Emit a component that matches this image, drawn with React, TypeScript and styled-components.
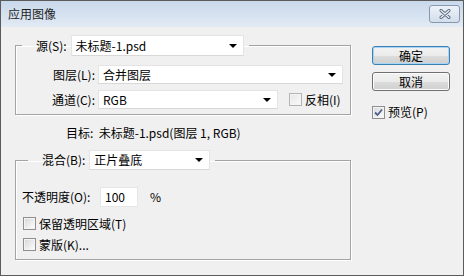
import React, { useState } from 'react'
import styled, { createGlobalStyle } from 'styled-components'

const GlobalStyle = createGlobalStyle`
  html, body {
    margin: 0;
    padding: 0;
    background: #f0f0f0;
  }
  body {
    font-family: "Noto Sans CJK SC", "Noto Sans", sans-serif;
    font-size: 12px;
    color: #000;
  }
  * { box-sizing: border-box; }
`

const Window = styled.div`
  width: 464px;
  height: 276px;
  border: 1px solid #5b5b5b;
  background: #f0f0f0;
  display: flex;
  flex-direction: column;
  overflow: hidden;
`

const TitleBar = styled.div`
  height: 26px;
  flex: none;
  display: flex;
  align-items: flex-start;
  justify-content: space-between;
  padding: 0 3px 0 7px;
  background: linear-gradient(#c8d8eb 0%, #d6e2f0 55%, #e2eaf4 100%);
`

const Title = styled.span`
  margin-top: 5px;
  line-height: 16px;
  font-size: 12px;
  color: #1e1e1e;
`

const CloseButton = styled.div`
  margin-top: 4px;
  width: 31px;
  height: 18px;
  border: 1px solid #8797ad;
  border-radius: 3px;
  background: linear-gradient(#edf2f8, #d3deeb);
  display: flex;
  align-items: center;
  justify-content: center;
`

const Body = styled.div`
  flex: 1;
  display: flex;
  padding: 8px 0 0 14px;
  gap: 21px;
`

const LeftColumn = styled.div`
  width: 336px;
  display: flex;
  flex-direction: column;
`

const RightColumn = styled.div`
  width: 78px;
  display: flex;
  flex-direction: column;
  padding-top: 11px;
`

const Group = styled.fieldset<{ $top: number; $bottom: number; $left?: number }>`
  margin: 0;
  border: 1px solid #a3a3a3;
  box-shadow: inset 1px 1px 0 #fff, 1px 1px 0 #fff;
  padding: ${p => p.$top}px 0 ${p => p.$bottom}px ${p => p.$left ?? 0}px;
  display: flex;
  flex-direction: column;
  min-width: 0;
`

const Legend = styled.legend`
  margin-left: 6px;
  padding: 0 5px 0 14px;
  display: flex;
  align-items: center;
`

const Label = styled.span<{ $width?: number; $right?: boolean }>`
  line-height: 16px;
  white-space: nowrap;
  ${p => (p.$width ? `width: ${p.$width}px; flex: none;` : '')}
  text-align: ${p => (p.$right ? 'right' : 'left')};
`

const LegendLabel = styled(Label)`
  margin-right: 4px;
`

const SelectBox = styled.div<{ $width: number; $height: number }>`
  width: ${p => p.$width}px;
  height: ${p => p.$height}px;
  background: #fff;
  border: 1px solid #e4e4e4;
  border-bottom-color: #d8d8d8;
  display: flex;
  align-items: center;
  justify-content: space-between;
  padding: 0 6px 0 4px;
  line-height: 16px;
`

const Arrow = styled.span`
  width: 0;
  height: 0;
  border-left: 4px solid transparent;
  border-right: 4px solid transparent;
  border-top: 4px solid #000;
`

const Row = styled.div<{ $h: number }>`
  display: flex;
  align-items: center;
  height: ${p => p.$h}px;
`

const Gap = styled.span<{ $w: number }>`
  width: ${p => p.$w}px;
  flex: none;
`

const InnerRows = styled.div`
  display: flex;
  flex-direction: column;
  gap: 6px;
`

const Target = styled.div`
  height: 35px;
  display: flex;
  align-items: center;
  padding-left: 51px;
  padding-top: 1px;
  line-height: 16px;
  white-space: pre;
`

const NumberInput = styled.div`
  width: 38px;
  height: 20px;
  background: #fff;
  border: 1px solid #e6e6e6;
  padding-left: 4px;
  display: flex;
  align-items: center;
  line-height: 16px;
`

const Percent = styled.span`
  margin-left: 12px;
  line-height: 16px;
`

const CheckRow = styled.label<{ $h: number; $pad?: number }>`
  display: flex;
  align-items: center;
  height: ${p => p.$h}px;
  padding-left: ${p => p.$pad ?? 0}px;
  gap: 3px;
  line-height: 16px;
  white-space: nowrap;
`

const Box = styled.span<{ $dim?: boolean }>`
  width: 13px;
  height: 13px;
  flex: none;
  border: 1px solid ${p => (p.$dim ? '#b4b4b4' : '#8f8f8f')};
  background: ${p =>
    p.$dim
      ? 'linear-gradient(135deg, #e6e6e6, #fbfbfb)'
      : 'linear-gradient(135deg, #d6d6d6, #ffffff)'};
  box-shadow: inset 0 0 0 1px #f4f4f4;
  display: flex;
  align-items: center;
  justify-content: center;
`

const Buttons = styled.div`
  display: flex;
  flex-direction: column;
  gap: 7px;
`

const Button = styled.div<{ $primary?: boolean }>`
  height: 19px;
  width: 78px;
  border: 1px solid ${p => (p.$primary ? '#3c7fb1' : '#707070')};
  border-radius: 3px;
  background: linear-gradient(#f2f2f2 0%, #ebebeb 50%, #dddddd 51%, #cfcfcf 100%);
  box-shadow: inset 0 0 0 1px ${p => (p.$primary ? '#a6d5f5' : '#fcfcfc')};
  display: flex;
  align-items: center;
  justify-content: center;
  line-height: 16px;
`

const Preview = styled(CheckRow)`
  margin-top: 13px;
`

function CheckBox({ checked, dim }: { checked?: boolean; dim?: boolean }) {
  return (
    <Box $dim={dim}>
      {checked && (
        <svg width="9" height="9" viewBox="0 0 9 9">
          <path d="M1 4.5 L3.5 7 L8 1.5" fill="none" stroke="#4b5f8c" strokeWidth="1.8" />
        </svg>
      )}
    </Box>
  )
}

function Select({ value, width, height }: { value: string; width: number; height: number }) {
  return (
    <SelectBox $width={width} $height={height}>
      <span>{value}</span>
      <Arrow />
    </SelectBox>
  )
}

function App() {
  const [opacity] = useState('100')

  return (
    <>
      <GlobalStyle />
      <Window>
        <TitleBar>
          <Title>应用图像</Title>
          <CloseButton>
            <svg width="12" height="10" viewBox="0 0 12 10">
              <path d="M2 1.5 L10 8.5 M10 1.5 L2 8.5" stroke="#56677f" strokeWidth="3" strokeLinecap="round" />
              <path d="M2 1.5 L10 8.5 M10 1.5 L2 8.5" stroke="#f4f7fb" strokeWidth="1.2" strokeLinecap="round" />
            </svg>
          </CloseButton>
        </TitleBar>
        <Body>
          <LeftColumn>
            <Group $top={9} $bottom={5}>
              <Legend>
                <LegendLabel>源(S):</LegendLabel>
                <Select value="未标题-1.psd" width={173} height={21} />
              </Legend>
              <InnerRows>
                <Row $h={19}>
                  <Label $width={79} $right>图层(L):</Label>
                  <Gap $w={3} />
                  <Select value="合并图层" width={245} height={19} />
                </Row>
                <Row $h={19}>
                  <Label $width={79} $right>通道(C):</Label>
                  <Gap $w={3} />
                  <Select value="RGB" width={180} height={19} />
                  <CheckRow $h={19} $pad={11}>
                    <CheckBox dim />
                    反相(I)
                  </CheckRow>
                </Row>
              </InnerRows>
            </Group>

            <Target>{'目标:  未标题-1.psd(图层 1, RGB)'}</Target>

            <Group $top={17} $bottom={4} $left={6}>
              <Legend>
                <LegendLabel>混合(B):</LegendLabel>
                <Select value="正片叠底" width={121} height={20} />
              </Legend>
              <Row $h={20}>
                <Label $width={78}>不透明度(O):</Label>
                <NumberInput>{opacity}</NumberInput>
                <Percent>%</Percent>
              </Row>
              <CheckRow $h={21} $pad={1} style={{ marginTop: 6 }}>
                <CheckBox />
                保留透明区域(T)
              </CheckRow>
              <CheckRow $h={21} $pad={1}>
                <CheckBox />
                蒙版(K)...
              </CheckRow>
            </Group>
          </LeftColumn>

          <RightColumn>
            <Buttons>
              <Button $primary>确定</Button>
              <Button>取消</Button>
            </Buttons>
            <Preview $h={16}>
              <CheckBox checked />
              预览(P)
            </Preview>
          </RightColumn>
        </Body>
      </Window>
    </>
  )
}

export default App
